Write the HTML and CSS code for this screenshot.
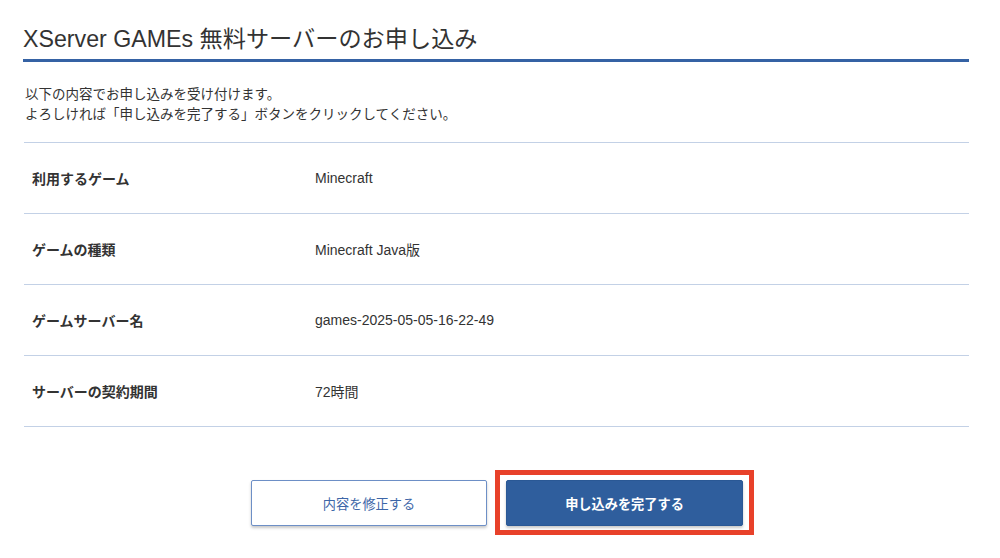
FILE: index.html
```html
<!DOCTYPE html>
<html lang="ja">
<head>
<meta charset="utf-8">
<title>XServer GAMEs 無料サーバーのお申し込み</title>
<link rel="stylesheet" href="styles.css">
</head>
<body>
<main class="page">
  <h1 class="title">XServer GAMEs 無料サーバーのお申し込み</h1>
  <p class="intro">以下の内容でお申し込みを受け付けます。<br>よろしければ「申し込みを完了する」ボタンをクリックしてください。</p>
  <div class="table">
    <div class="row"><div class="label">利用するゲーム</div><div class="value">Minecraft</div></div>
    <div class="row"><div class="label">ゲームの種類</div><div class="value">Minecraft Java版</div></div>
    <div class="row"><div class="label">ゲームサーバー名</div><div class="value">games-2025-05-05-16-22-49</div></div>
    <div class="row"><div class="label">サーバーの契約期間</div><div class="value">72時間</div></div>
  </div>
  <div class="actions">
    <button class="btn btn-outline" type="button">内容を修正する</button>
    <div class="highlight">
      <button class="btn btn-primary" type="button">申し込みを完了する</button>
    </div>
  </div>
</main>
</body>
</html>
```
FILE: styles.css
```css
* { box-sizing: border-box; }
html, body { margin: 0; padding: 0; background: #fff; }
body {
  font-family: "Liberation Sans", "Noto Sans CJK JP", Arial, sans-serif;
  color: #333;
  min-height: 558px;
}
.page {
  width: 945px;
  margin-left: 24px;
  padding-top: 23px;
  padding-bottom: 32px;
}
.title {
  margin: 0 0 0 -1px;
  font-size: 23.2px;
  font-weight: normal;
  line-height: 32px;
  color: #333;
  padding-bottom: 4px;
  border-bottom: 3px solid #3562a4;
}
.intro {
  margin: 23px 0 0;
  font-size: 13.5px;
  line-height: 20px;
  color: #333;
  padding-left: 1px;
}
.table {
  margin-top: 17px;
  border-top: 1px solid #c3d1e6;
}
.row {
  display: grid;
  grid-template-columns: 283px 1fr;
  align-items: center;
  height: 71px;
  padding-left: 8px;
  border-bottom: 1px solid #c3d1e6;
  font-size: 14px;
}
.label { font-weight: bold; color: #333; }
.value { color: #333; }
.actions {
  display: flex;
  justify-content: center;
  gap: 19px;
  margin-top: 53px;
  padding-left: 1px;
}
.btn {
  width: 236px;
  height: 46px;
  border-radius: 2px;
  font-family: "Liberation Sans", "Noto Sans CJK JP", Arial, sans-serif;
  font-size: 13.2px;
  cursor: pointer;
  display: block;
  box-shadow: 0 2px 3px rgba(0, 0, 0, 0.22);
}
.btn-outline {
  background: #fff;
  border: 1px solid #6d8fc6;
  color: #3d66a8;
}
.btn-primary {
  width: 237px;
  background: #2f5e9d;
  border: 1px solid #2a5895;
  color: #fff;
  font-weight: bold;
}
.highlight {
  position: relative;
}
.highlight::after {
  content: "";
  position: absolute;
  top: -10px;
  bottom: -9px;
  left: -11px;
  right: -11px;
  border: 5px solid #e8412a;
  pointer-events: none;
}
```
